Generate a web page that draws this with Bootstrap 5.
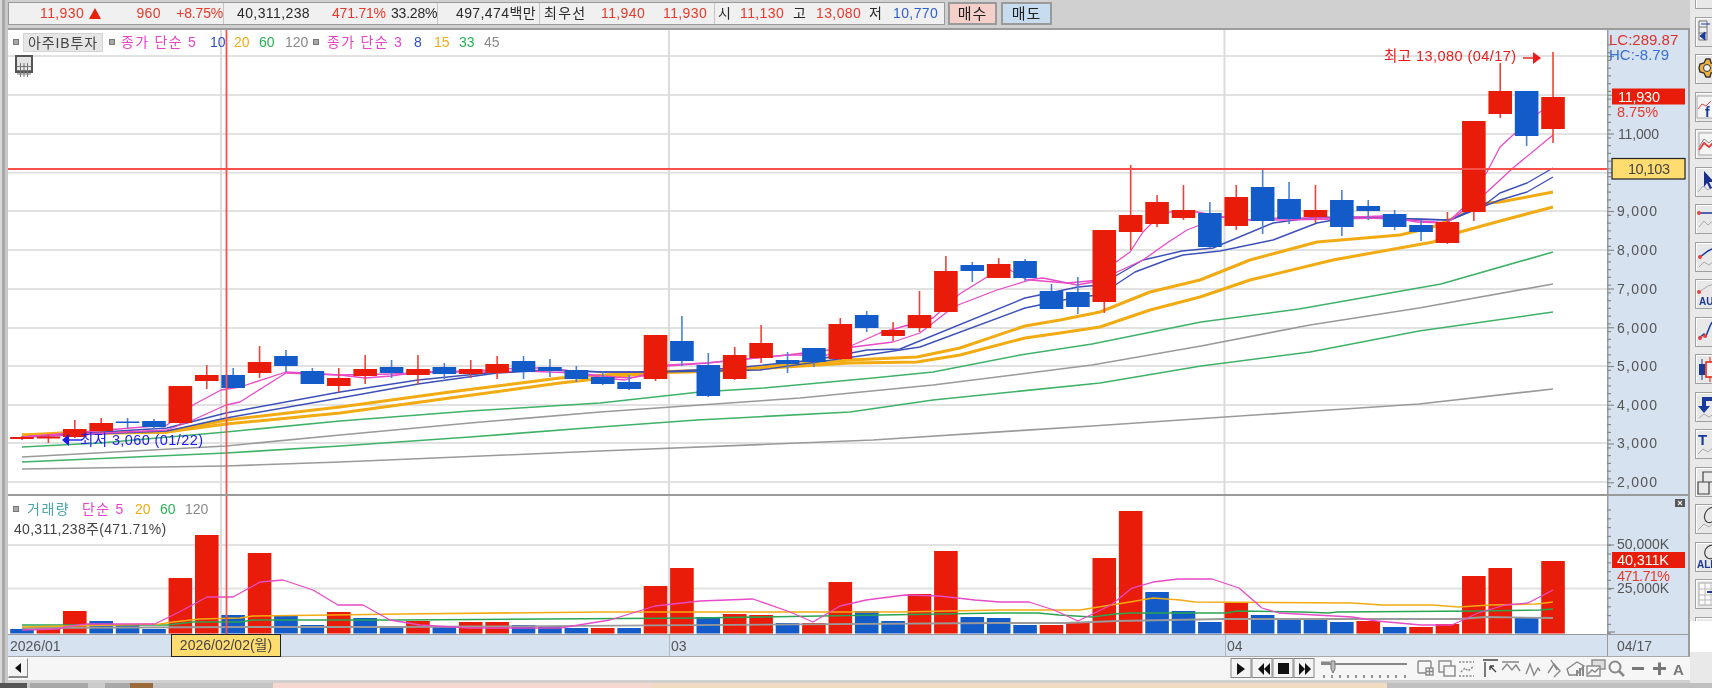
<!DOCTYPE html>
<html lang="ko">
<head>
<meta charset="utf-8">
<title>아주IB투자 차트</title>
<link href="https://cdn.jsdelivr.net/npm/bootstrap@5.3.0/dist/css/bootstrap.min.css" rel="stylesheet">
<style>
html,body{margin:0;height:688px;overflow:hidden;background:#d0d0d0}
body,svg text{font-family:"Liberation Sans","Noto Sans CJK KR",sans-serif}
.screen{width:1712px;height:688px;background:#d0d0d0;overflow:hidden;filter:blur(.3px)}
.left-rail{width:8px;background:linear-gradient(90deg,#d8d8d8 0 2px,#a8a8a8 2px 5px,#c8c8c8 5px 8px);flex:none}
.work{width:1682px;flex:none}
.quote-row{height:28px;padding-top:2px;gap:3px;flex:none}
.quote-box{height:23px;width:937px;background:#f0f0f0;border:1px solid #9a9a9a;font-size:14px;line-height:21px;white-space:nowrap;color:#222;letter-spacing:.4px}
.qc{height:21px;align-items:center;border-right:1px solid #c4c4c4}
.qc1{width:215px;grid-template-columns:31px 49px 12px 60px 62px}
.qc2{width:214px;grid-template-columns:13px 95px 59px 47px}
.qc3{width:102px;grid-template-columns:18px 84px}
.qc4{width:175px;grid-template-columns:4px 57px 62px 52px}
.qc5{width:229px;grid-template-columns:3px 22px 53px 23px 53px 24px 50px;border-right:0}
.wide-ko{letter-spacing:1.3px}
.pct{letter-spacing:-.2px}
.up{color:#e8392a}.dn{color:#2d5fd0}.ink{color:#2a2a2a}
.tri{width:0;height:0;border-left:6px solid transparent;border-right:6px solid transparent;border-bottom:11px solid #e8200c}
.order-btn{height:23px;width:49px;border:2px solid #9a9a9a;font-size:15px;line-height:19px;text-align:center;color:#222;letter-spacing:1px}
.order-buy{background:#f5cfc9}.order-sell{background:#c8dcf0;width:51px;margin-left:1px}
.frame{border-top:2px solid #9c9c9c;border-right:2px solid #9c9c9c;background:#fff;flex:none}
.pane-main{height:464px}
.pane-vol{height:140px;border-top:2px solid #9a9a9a}
.plot{width:1599px;flex:none;background:#fff}
.scale{width:81px;flex:none;background:#d6e2f0;border-left:0}
.legend-main{left:5px;top:2px;height:20px;font-size:14px;line-height:20px;white-space:nowrap}
.sq{width:6px;height:6px;background:#a8a8a8;border:1px solid #777;flex:none}
.name-chip{width:80px;height:19px;background:#e6e6e6;border:1px solid #d4d4d4;color:#444;text-align:center;font-size:14px;line-height:18px;margin:0 6px 0 4px;letter-spacing:.9px}
.l1{width:78px;margin-left:6px;letter-spacing:1.3px}.l2{width:14px;margin-left:11px}.l3{width:15px;margin-left:10px}.l4{width:15px;margin-left:10px}.l5{width:21px;margin-left:11px;margin-right:7px}
.l6{width:79px;margin-left:8px;letter-spacing:1.3px}.l7{width:8px;margin-left:8px}.l8{width:14px;margin-left:12px}.l9{width:14px;margin-left:11px}.l10{width:15px;margin-left:11px}
.mag{color:#e843c8}.blu{color:#2d4fc8}.org{color:#f2ab12}.grn{color:#2bb057}.gry{color:#8a8a8a}.teal{color:#4aa5a5}
.grid-ico{left:7px;top:25px;width:18px;height:18px;border:2px solid #555;background:#e4e4e4}
.legend-vol{left:5px;top:3px;font-size:14px;line-height:20px;white-space:nowrap}
.v1{width:44px;margin-left:8px;letter-spacing:1.5px}.v2{width:42px;margin-left:11px;letter-spacing:1.3px}.v3{width:14px;margin-left:11px}.v4{width:14px;margin-left:11px}.v5{width:22px;margin-left:11px}
.vol-read{font-size:14px;line-height:16px;color:#444;margin-top:2px;padding-left:1px;letter-spacing:.3px}
.close-x{right:3px;top:3px;width:10px;height:8px;background:#555}
.close-x svg{display:block}
.date-row{height:23px;background:#d6e2f0;border-top:1px solid #9a9a9a;border-bottom:1px solid #aaa;border-right:2px solid #9c9c9c;font-size:14px;color:#555;line-height:22px;flex:none}
.d1{width:163px;padding-left:2px}.d2{width:110px;height:23px;margin-top:-1px;background:#ffdc70;border:1px solid #222;color:#444;text-align:center;line-height:21px;font-size:14px}
.d3{width:388px;padding-left:1px}.d4{width:556px;padding-left:1px;border-left:1px solid #b8b8b8}.d5{width:382px;border-left:1px solid #b8b8b8;padding-left:1px}.d6{flex:1;border-left:1px solid #9a9a9a;padding-left:9px}
.scroll-row{height:23px;background:#f6f6f6;flex:none}
.step-btn{width:20px;height:20px;margin-top:1px;background:#f4f4f4;border:1px solid #fff;border-right-color:#888;border-bottom:2px solid #888}
.tool-rail{width:22px;flex:none;background:#e9e9e9;padding-left:5px;gap:7.5px;margin-top:-21px;height:673px;position:relative}
.tool-rail::after{content:"";position:absolute;left:0;right:0;bottom:0;height:31px;background:#fff}
.tool{width:30px;height:30px;flex:none;background:#e8e8e8;border:1px solid #a0a0a0;border-right:0;box-shadow:inset 1px 1px 0 #fff;overflow:hidden}
.tool svg{display:block}
.rail-top{background:#e9e9e9}
.bottom-strip{height:5px;background:#c8c8c8;flex:none}
.tab-a{width:27px;background:#555}.tab-b{width:3px}.tab-c{width:58px;background:#a8a8a8}.tab-d{width:17px;background:#ccc}.tab-e{width:25px;background:#a8a8a8}.tab-f{width:23px;background:#9a6a3a}.tab-g{width:120px;background:#c4c4c4}.tab-h{width:380px;background:#f7d8d0}.tab-i{width:734px;background:#f0dcc0}.tab-j{flex:1;background:#bfbfbf}
</style>
</head>
<body>
<div class="screen d-flex flex-column">
  <div class="d-flex flex-grow-1" style="min-height:0">
    <div class="left-rail"></div>
    <div class="work d-flex flex-column">
      <div class="quote-row d-flex">
        <div class="quote-box d-flex">
          <div class="qc qc1 d-grid"><i></i><span class="up">11,930</span><span class="tri"></span><span class="up text-end">960</span><span class="up text-end pct">+8.75%</span></div>
          <div class="qc qc2 d-grid"><i></i><span class="ink">40,311,238</span><span class="up pct">471.71%</span><span class="ink pct">33.28%</span></div>
          <div class="qc qc3 d-grid"><i></i><span class="ink">497,474백만</span></div>
          <div class="qc qc4 d-grid"><i></i><span class="ink wide-ko">최우선</span><span class="up">11,940</span><span class="up">11,930</span></div>
          <div class="qc qc5 d-grid"><i></i><span class="ink">시</span><span class="up">11,130</span><span class="ink">고</span><span class="up">13,080</span><span class="ink">저</span><span class="dn">10,770</span></div>
        </div>
        <div class="order-btn order-buy">매수</div>
        <div class="order-btn order-sell">매도</div>
      </div>
      <div class="frame">
        <div class="pane-main d-flex">
          <div class="plot position-relative">
            <svg id="mainSvg" width="1599" height="464" viewBox="8 30 1599 464"></svg>
            <div class="legend-main position-absolute d-flex align-items-center">
              <span class="sq"></span><span class="name-chip">아주IB투자</span><span class="sq"></span>
              <span class="l1 mag">종가 단순 5</span><span class="l2 blu">10</span><span class="l3 org">20</span><span class="l4 grn">60</span><span class="l5 gry">120</span><span class="sq"></span>
              <span class="l6 mag">종가 단순 3</span><span class="l7 blu">8</span><span class="l8 org">15</span><span class="l9 grn">33</span><span class="l10 gry">45</span>
            </div>
            <div class="grid-ico position-absolute"><svg width="14" height="14" viewBox="0 0 14 14"><path d="M0 3.5H14M0 7.5H14M0 11H14M3.5 0V14M7 0V14M10.5 0V14" stroke="#777" stroke-width="1"/></svg></div>
          </div>
          <div class="scale"><svg id="mainAxis" width="81" height="464" viewBox="1607 30 81 464"></svg></div>
        </div>
        <div class="pane-vol d-flex">
          <div class="plot position-relative">
            <svg id="volSvg" width="1599" height="138" viewBox="8 496 1599 138"></svg>
            <div class="legend-vol position-absolute">
              <div class="d-flex align-items-center"><span class="sq"></span><span class="v1 teal">거래량</span><span class="v2 mag">단순 5</span><span class="v3 org">20</span><span class="v4 grn">60</span><span class="v5 gry">120</span></div>
              <div class="vol-read">40,311,238주(471.71%)</div>
            </div>
          </div>
          <div class="scale position-relative"><svg id="volAxis" width="81" height="138" viewBox="1607 496 81 138"></svg><span class="close-x position-absolute"><svg width="10" height="8" viewBox="0 0 10 8"><path d="M3 2L7 6M7 2L3 6" stroke="#eee" stroke-width="1.2"/></svg></span></div>
        </div>
      </div>
      <div class="date-row d-flex">
        <div class="d1">2026/01</div><div class="d2">2026/02/02(월)</div><div class="d3">&nbsp;</div><div class="d4">03</div><div class="d5">04</div><div class="d6">04/17</div>
      </div>
      <div class="scroll-row d-flex">
        <div class="step-btn d-flex align-items-center justify-content-center"><svg width="8" height="10" viewBox="0 0 8 10"><path d="M7 0V10L1 5Z" fill="#111"/></svg></div>
        <div class="flex-grow-1"></div>
        <svg width="460" height="23" viewBox="1228 658 460 23">
          <g fill="#f4f4f4" stroke="#888"><rect x="1229" y="659.5" width="20" height="19"/><rect x="1250" y="659.5" width="20" height="19"/><rect x="1271" y="659.5" width="20" height="19"/><rect x="1292" y="659.5" width="20" height="19"/></g>
          <path d="M1235 664V676L1243 670ZM1262 664V676L1256 670ZM1268 664V676L1262 670Z M1276 664H1287V675H1276ZM1297 664V676L1303 670ZM1303 664V676L1309 670Z" fill="#111"/>
          <path d="M1319 665H1405" stroke="#888" stroke-width="2"/><path d="M1319 664H1328" stroke="#888" stroke-width="3"/>
          <path d="M1329 662H1333V670L1331 674L1329 670Z" fill="#bbb" stroke="#777"/>
          <path d="M1322 676V679M1330 676V679M1338 676V679M1346 676V679M1354 676V679M1362 676V679M1370 676V679M1378 676V679M1386 676V679M1394 676V679M1403 676V679" stroke="#333" stroke-width="1"/>
          <g fill="none" stroke="#888" stroke-width="1.4">
            <rect x="1416" y="662" width="13" height="12" rx="1"/><rect x="1424" y="669" width="7" height="7" fill="#f6f6f6"/><path d="M1427.5 669V676M1424 672.5H1431"/>
            <rect x="1437" y="662" width="12" height="11"/><rect x="1442" y="667" width="11" height="10" fill="#f6f6f6"/>
            <path d="M1457 663H1472M1457 677H1472M1459 673L1463 669L1466 672L1472 667" stroke-dasharray="2 1.5"/>
            <path d="M1481 661H1496M1483 663V678M1488 667L1494 673M1488 667H1492M1488 667V671" stroke="#444"/>
            <path d="M1500 671L1505 665L1510 671L1514 666L1518 672M1500 663H1517"/>
            <path d="M1524 675L1528 665L1532 676L1536 669L1538 672"/>
            <path d="M1546 674L1552 665L1558 672L1552 678M1549 661L1555 671"/>
            <path d="M1565 670L1575 663L1582 667L1574 676H1567Z"/><path d="M1575 671V677M1578 669V677M1581 667V677" stroke-width="2"/>
            <rect x="1590" y="661" width="13" height="9" fill="#ddd"/><rect x="1585" y="667" width="13" height="10" fill="#f6f6f6"/><path d="M1586 675L1590 671L1593 673L1597 669"/>
          </g>
          <circle cx="1613" cy="668" r="5.5" fill="none" stroke="#888" stroke-width="2"/><path d="M1617 672L1622 677" stroke="#888" stroke-width="2.5"/>
          <path d="M1630 669.5H1642M1651 669.5H1664M1657.5 663.5V676" stroke="#777" stroke-width="3"/>
          <text x="1671" y="676" font-size="15" font-weight="700" fill="#777">A</text>
        </svg>
      </div>
    </div>
    <div class="rail-top flex-grow-1 d-flex flex-column" style="min-width:0">
      <div class="tool-rail d-flex flex-column" id="rail"></div>
    </div>
  </div>
  <div class="bottom-strip d-flex">
    <i class="tab-a"></i><i class="tab-b"></i><i class="tab-c"></i><i class="tab-d"></i><i class="tab-e"></i><i class="tab-f"></i><i class="tab-g"></i><i class="tab-h"></i><i class="tab-i"></i><i class="tab-j"></i>
  </div>
</div>
<script>
var R='#e81c08',B='#125bc8';
var C=[
['r',437,439,436,440],['r',436.5,438.5,434,443],['r',429,437,420,438],['r',423,431,418,432],['b',421.5,423,418,428],['b',421,427,419,429],
['r',386,423,386,425],['r',375,381,365,389],['b',375,388,368,388],['r',362,373,346,378],['b',356,366,350,372],['b',371,384,368,384],
['r',378,386,368,392],['r',369,376,355,384],['b',367,373,360,378],['r',369,375,355,384],['b',367,374,363,379],['r',369,374,360,378],
['r',364,373,356,379],['b',361,372,356,379],['b',367,371,359,377],['b',370,379,366,382],['b',377,384,371,385],['b',382,389,375,390],
['r',335,379,335,381],['b',341,361,316,366],['b',365,396,353,397],['r',355,379,347,380],['r',343,358,325,363],['b',360,364,352,373],
['b',348,362,348,367],['r',324,359,318,360],['b',315,328,311,332],['r',330,336,322,341],['r',315,328,291,332],['r',271,312,256,312],
['b',265,271,262,282],['r',264,278,258,278],['b',261,278,259,281],['b',291,309,284,309],['b',292,307,277,314],['r',230,302,230,313],
['r',215,232,165,250],['r',202,224,195,227],['r',210,218,185,220],['b',213,247,202,248],['r',197,226,185,230],['b',187,221,169,234],
['b',199,219,182,224],['r',210,217,185,223],['b',200,227,190,236],['b',206,211,200,220],['b',214,227,210,230],['b',225,232,220,241],
['r',222,243,212,244],['r',121,212,121,221],['r',91,114,63,118],['b',91,136,91,146],['r',97,129,52,143]];
var V=[['b',629],['r',628],['r',611],['b',621],['b',625],['b',629],['r',578],['r',535],['b',615],['r',553],['b',616],['b',625],['r',612],['b',618],['b',627],['r',621],['b',626],['r',622],['r',622],['b',625],['b',626],['b',628],['r',628],['b',628],['r',586],['r',568],['b',617],['r',614],['r',615],['b',623],['r',623],['r',582],['b',611],['b',621],['r',594],['r',551],['b',617],['b',618],['b',625],['r',625],['r',622],['r',558],['r',511],['b',592],['b',611],['b',622],['r',603],['b',615],['b',619],['b',619],['b',622],['r',621],['b',627],['r',627],['r',624],['r',576],['r',568],['b',618],['r',561]];
function xi(i){return 22+26.397*i}
var L={
 gry2:['#9a9a9a',1.6,'22,469 226,466 340,462 600,451 873,440 1092,426 1300,412 1419,404 1553,389'],
 grn2:['#3fb268',1.6,'22,462 226,453 340,446 470,437 600,427 697,420 850,412 933,400 1100,383 1201,366 1310,352 1419,331 1553,312'],
 gry1:['#9a9a9a',1.6,'22,457 226,446 340,435 470,423 600,412 700,405 800,398 933,385 1092,365 1201,346 1310,325 1419,308 1553,284'],
 grn1:['#3fb268',1.6,'22,447 100,443 226,432 340,421 470,411 600,403 700,392 764,388 873,378 933,372 1020,355 1092,344 1201,322 1299,309 1441,284 1553,252'],
 org2:['#f2ab12',3,'22,435 167,432 226,424 340,413 450,398 560,383 650,373 720,371 850,363 917,362 960,355 1025,338 1060,333 1100,327 1150,310 1200,297 1250,280 1333,260 1433,242 1460,232 1500,221 1553,207'],
 org1:['#f2ab12',3,'22,435 62,433 167,432 226,420 340,407 450,392 560,378 650,372 720,370 850,360 917,357 960,348 1025,326 1060,320 1100,312 1150,292 1200,280 1250,260 1317,242 1400,235 1433,227 1487,203 1500,202 1553,192'],
 blu2:['#3c50b8',1.4,'22,437 167,431 226,418 340,398 418,384 497,373 550,370 603,372 655,372 760,370 867,355 920,347 1025,308 1078,297 1100,295 1135,272 1167,260 1183,255 1220,251 1273,240 1317,223 1350,217 1450,220 1487,205 1500,200 1527,192 1553,177'],
 blu1:['#3c50b8',1.4,'22,437 167,428 226,413 340,392 418,380 497,372 550,370 603,372 655,372 734,368 814,360 867,350 900,349 1025,298 1078,287 1100,285 1143,260 1182,251 1213,248 1273,223 1317,217 1450,220 1487,203 1500,193 1527,183 1553,168'],
 pnk2:['#e84ac8',1.3,'22,437 167,430 193,420 226,405 240,402 286,373 340,375 391,374 444,372 497,372 523,371 576,373 603,376 629,378 655,374 667,366 707,363 787,355 853,347 893,342 920,333 947,312 958,305 997,290 1030,280 1067,283 1100,280 1143,260 1167,243 1187,230 1200,225 1223,217 1253,220 1283,220 1383,218 1447,223 1487,192 1513,168 1553,135'],
 pnk1:['#e84ac8',1.3,'22,437 167,425 193,405 221,390 240,387 286,372 340,375 365,378 391,376 418,372 471,371 523,368 550,368 576,372 603,378 625,380 642,375 668,365 707,363 787,355 827,355 853,345 880,333 933,318 958,295 987,277 1010,270 1027,280 1043,278 1077,285 1093,282 1105,270 1130,252 1143,232 1153,222 1170,212 1197,212 1223,217 1250,220 1280,218 1330,218 1383,216 1417,222 1447,223 1463,208 1487,172 1500,147 1513,135 1540,112 1553,103']
};
var VL=[
 ['#9a9a9a',1.8,'22,628 247,627 400,627 1000,623 1065,623 1117,621 1224,619 1459,619 1486,617 1553,618'],
 ['#2aa551',1.6,'22,625 167,625 193,622 240,622 253,620 400,620 700,618 1000,613 1038,613 1059,615 1092,617 1115,614 1130,613 1226,613 1237,611 1302,612 1329,613 1337,612 1478,611 1540,610 1553,609'],
 ['#f2ab12',1.6,'22,627 160,624 173,622 200,619 240,618 253,616 333,615 400,614 600,612 750,612 900,612 1000,610 1080,610 1130,602 1153,598 1180,600 1195,602 1352,603 1383,605 1432,605 1459,607 1490,605 1536,604 1553,602'],
 ['#e84ac8',1.3,'22,630 57,629 70,626 87,624 155,624 183,610 207,597 233,597 260,582 283,580 313,590 338,605 363,605 390,620 420,625 470,628 560,628 610,620 655,606 700,601 753,599 790,612 813,622 840,606 866,600 905,595 939,596 975,600 1000,602 1029,602 1054,610 1078,621 1111,605 1132,588 1153,582 1178,579 1212,579 1239,588 1262,608 1279,613 1352,617 1377,621 1421,625 1452,625 1478,613 1505,605 1528,603 1553,590']
];
function line(p){return '<polyline fill="none" stroke-linejoin="round" stroke="'+p[0]+'" stroke-width="'+p[1]+'" points="'+p[2]+'"/>'}
function hl(y,x1,x2,c,w){return '<path d="M'+x1+' '+y+'H'+x2+'" stroke="'+c+'" stroke-width="'+w+'"/>'}
function vl(x,y1,y2,c,w){return '<path d="M'+x+' '+y1+'V'+y2+'" stroke="'+c+'" stroke-width="'+w+'"/>'}
var GRID='#e2e2e2',CUR='#f8504a';
var m='';
[56,95,134,172.7,211,250,289,328,366,405,443,482].forEach(function(y){m+=hl(y,8,1607,GRID,2)});
[221,669,1224.5].forEach(function(x){m+=vl(x,30,494,'#dcdcdc',2)});
['gry2','grn2','gry1','grn1','org2','org1','blu2','blu1','pnk2','pnk1'].forEach(function(k){m+=line(L[k])});
C.forEach(function(c,i){var x=xi(i),col=c[0]=='r'?R:B,wc=c[0]=='r'?'#f0403a':'#4b80d2';
 m+=vl(x,c[3],c[4],wc,1.6);
 m+='<rect x="'+(x-11.8)+'" y="'+c[1]+'" width="23.6" height="'+(c[2]-c[1])+'" fill="'+col+'"/>';});
m+=hl(169,8,1607,CUR,1.8)+vl(226.5,30,494,CUR,1.8);
m+='<text x="1384" y="61" font-size="14.5" fill="#f01818" textLength="132">최고 13,080 (04/17)</text><path d="M1523 58H1534" stroke="#f01818" stroke-width="1.4"/><path d="M1533 52V64L1541 58Z" fill="#f01818"/>';
m+='<text x="80" y="445" font-size="14.5" fill="#1a1af0" textLength="123">최저 3,060 (01/22)</text><path d="M69 440H82" stroke="#1a1af0" stroke-width="1.4"/><path d="M69 434V446L62 440Z" fill="#1a1af0"/>';
document.getElementById('mainSvg').innerHTML=m;

var a='';
a+=vl(1607.5,30,494,'#9a9a9a',2);
for(var p=1900;p<=13400;p+=200){var y=134+(11000-p)*0.03875;a+=hl(y,1607,p%1000==0?1614:1611,'#8a8a8a',1.2)}
[13000,12000,11000,10000,9000,8000,7000,6000,5000,4000,3000,2000].forEach(function(q){a+=hl(134+(11000-q)*0.03875,1607,1614,'#8a8a8a',1.2)});
a+='<text x="1609" y="45" font-size="15" fill="#e0302a">LC:289.87</text><text x="1609" y="60" font-size="15" fill="#3a70d0">HC:-8.79</text>';
[[11,134],[9,211],[8,250],[7,289],[6,328],[5,366],[4,405],[3,443],[2,482]].forEach(function(t){var s=t[0]>9?'11,000':t[0]+',000';a+='<text x="'+(t[0]>9?1618:1617)+'" y="'+(t[1]+4.5)+'" font-size="14" fill="#555" textLength="'+(t[0]>9?41:40)+'">'+s+'</text>'});
a+='<rect x="1612" y="88.5" width="73" height="16" fill="#e81c08"/><text x="1618" y="101.5" font-size="14.5" fill="#fff" textLength="42">11,930</text><text x="1617" y="117" font-size="14.5" fill="#e8392a">8.75%</text>';
a+='<rect x="1612" y="158.5" width="73" height="20.5" fill="#ffdc70" stroke="#222" stroke-width="1.2"/><text x="1628" y="173.5" font-size="14.5" fill="#444" textLength="42">10,103</text>';
document.getElementById('mainAxis').innerHTML=a;

var v='';
[545,588.5].forEach(function(y){v+=hl(y,8,1607,GRID,2)});
[221,669,1224.5].forEach(function(x){v+=vl(x,496,634,'#dcdcdc',2)});
V.forEach(function(b,i){var x=xi(i);v+='<rect x="'+(x-11.8)+'" y="'+b[1]+'" width="23.6" height="'+(633.5-b[1])+'" fill="'+(b[0]=='r'?R:B)+'"/>'});
VL.forEach(function(l){v+=line(l)});
v+=vl(226.5,496,634,CUR,1.8);
document.getElementById('volSvg').innerHTML=v;

var w=vl(1607.5,496,634,'#9a9a9a',2);
for(var y2=510;y2<=634;y2+=8.8){w+=hl(y2,1607,1611,'#8a8a8a',1.2)}
w+=hl(545,1607,1614,'#8a8a8a',1.2)+hl(588.5,1607,1614,'#8a8a8a',1.2)+hl(632,1607,1615,'#8a8a8a',1.2);
w+='<text x="1617" y="549" font-size="14" fill="#555" textLength="52">50,000K</text><text x="1617" y="593" font-size="14" fill="#555" textLength="52">25,000K</text>';
w+='<rect x="1612" y="552" width="73" height="16" fill="#e81c08"/><text x="1617" y="565" font-size="14.5" fill="#fff" textLength="52">40,311K</text><text x="1617" y="581" font-size="14.5" fill="#e8392a" textLength="53">471.71%</text>';
document.getElementById('volAxis').innerHTML=w;

var icons=[
'<rect x="2" y="-6" width="20" height="18" fill="none" stroke="#777"/>',
'<path d="M3 3H11V22H3ZM3 9H11M3 15H11" fill="#eee" stroke="#777"/><path d="M5 6H14M4 18L9 14V22Z" stroke="#1a3a9a" fill="#1a3a9a"/><path d="M17 7H22" stroke="#1a3a9a" stroke-width="2"/>',
'<path d="M8 8L10 4L14 4L15 8L19 9L19 17L15 18L14 22L10 22L8 18L4 17L3 13L4 9Z" fill="#f0b040" stroke="#333" stroke-width="1.4"/><circle cx="11" cy="13" r="3.5" fill="#eee" stroke="#333"/>',
'<rect x="1" y="3" width="24" height="22" fill="#f4f4f4" stroke="#aaa"/><path d="M2 16L6 11L10 13L15 8" stroke="#e84040" fill="none"/><text x="9" y="24" font-size="14" font-weight="700" fill="#1a3a9a">f</text>',
'<rect x="3" y="3" width="22" height="22" fill="#f4f4f4" stroke="#aaa"/><path d="M3 17L8 9L13 13L18 8" stroke="#888" fill="none"/><path d="M3 20L8 13L13 17L18 12" stroke="#e84040" stroke-width="2" fill="none"/>',
'<path d="M2 24L7 18L12 22L18 18" stroke="#aaa" fill="none"/><path d="M8 3V19L11 15L14 21L16 20L13 14H18Z" fill="#1a2f8a"/>',
'<path d="M2 8H16" stroke="#1a3a9a" stroke-width="1.5"/><circle cx="3" cy="8" r="2" fill="#e84040"/><path d="M3 22L8 16L12 20L18 15" stroke="#aaa" fill="none"/>',
'<path d="M4 14L12 8L18 5" stroke="#1a3a9a" stroke-width="1.5" fill="none"/><circle cx="4" cy="14" r="2" fill="#e84040"/><path d="M3 24L8 19L13 22L18 18" stroke="#aaa" fill="none"/>',
'<path d="M3 12L12 6L18 4" stroke="#aaa" fill="none"/><circle cx="3" cy="12" r="2" fill="#e84040"/><text x="3" y="25" font-size="10" font-weight="700" fill="#1a3a9a">AU</text>',
'<path d="M3 20L8 16L10 18L14 8L16 4" stroke="#1a3a9a" stroke-width="1.5" fill="none"/><path d="M3 20L9 18" stroke="#aaa"/><circle cx="4" cy="20" r="2" fill="#e84040"/><circle cx="9" cy="18" r="2" fill="#e84040"/>',
'<path d="M6 4V25" stroke="#1a3a9a"/><rect x="3" y="9" width="6" height="11" fill="#1a3a9a"/><path d="M14 2V27" stroke="#e81c08"/><rect x="10" y="7" width="8" height="15" fill="#f4f4f4" stroke="#e81c08" stroke-width="1.5"/>',
'<path d="M18 4H6V13H2L8 20L14 13H10V8H18Z" fill="#1a3a9a"/><path d="M3 25L8 21L13 24L18 21" stroke="#aaa" fill="none"/>',
'<text x="2" y="15" font-size="15" font-weight="700" font-family="Liberation Serif" fill="#1a3a9a">T</text><path d="M2 24L7 19L12 22L18 17" stroke="#aaa" fill="none"/>',
'<path d="M7 4H18V14H7ZM2 14H13V26H2Z" fill="none" stroke="#444" stroke-width="1.2"/>',
'<ellipse cx="15" cy="10" rx="6" ry="8" fill="none" stroke="#444" stroke-width="1.2" transform="rotate(30 15 10)"/><path d="M2 25L8 19L13 22L18 18" stroke="#aaa" fill="none"/>',
'<ellipse cx="15" cy="9" rx="6" ry="7" fill="none" stroke="#444" stroke-width="1.2" transform="rotate(30 15 9)"/><text x="1" y="25" font-size="10" font-weight="700" fill="#1a3a9a">ALL</text>',
'<rect x="3" y="3" width="22" height="22" fill="#fafafa" stroke="#aaa"/><path d="M3 9H25M3 15H25M3 20H25M9 3V25M15 3V25" stroke="#bbb"/><path d="M11 12H18" stroke="#1a3a9a" stroke-width="2"/>',
'<path d="M3 9H22" stroke="#e84040" stroke-width="2"/><path d="M3 16H22" stroke="#111" stroke-width="2"/><path d="M3 23H22" stroke="#3a70d0" stroke-width="2"/><path d="M3 14L8 11L13 14" stroke="#aaa" fill="none"/>'
];
document.getElementById('rail').innerHTML=icons.map(function(s){return '<div class="tool"><svg width="30" height="28" viewBox="0 0 30 28">'+s+'</svg></div>'}).join('');
</script>
<script src="https://cdn.jsdelivr.net/npm/bootstrap@5.3.0/dist/js/bootstrap.bundle.min.js"></script>
</body>
</html>
